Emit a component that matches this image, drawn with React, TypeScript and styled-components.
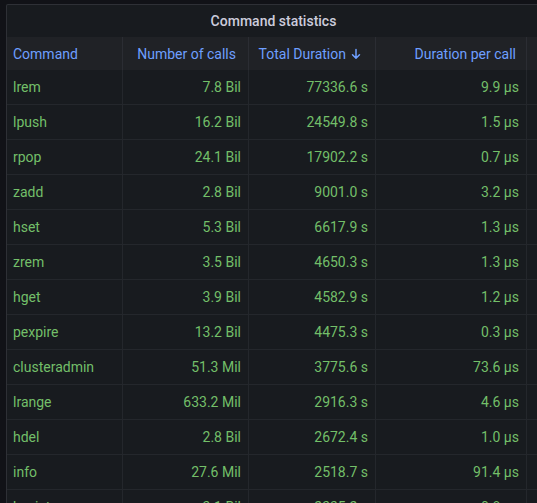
import React from "react";
import styled, { createGlobalStyle } from "styled-components";

const GlobalStyle = createGlobalStyle`
  html, body {
    margin: 0;
    padding: 0;
    height: 100%;
    overflow: hidden;
    background: #111217;
  }
  body {
    font-family: Roboto, "Noto Sans", "Liberation Sans", sans-serif;
    font-size: 14px;
  }
`;

const Page = styled.div`
  padding: 4px 0 0 6px;
  height: 100vh;
  box-sizing: border-box;
`;

const Panel = styled.section`
  width: 535px;
  height: 520px;
  box-sizing: border-box;
  background: #181b1f;
  border: 1px solid rgba(204, 204, 220, 0.12);
  border-radius: 2px;
  overflow: hidden;
  display: flex;
  flex-direction: column;
`;

const Title = styled.h2`
  margin: 0;
  height: 32px;
  display: flex;
  align-items: center;
  justify-content: center;
  font-size: 14px;
  font-weight: 500;
  color: #ccccdc;
  flex-shrink: 0;
`;

const Table = styled.div`
  display: flex;
  flex-direction: column;
  width: 700px;
`;

const HeaderRow = styled.div`
  display: flex;
  height: 33px;
  background: #202226;
`;

const Row = styled.div`
  display: flex;
  height: 35px;
  box-sizing: border-box;
  border-bottom: 1px solid rgba(204, 204, 220, 0.07);
`;

const Cell = styled.div<{ $w: number; $right?: boolean; $head?: boolean; $pr?: number }>`
  width: ${(p) => p.$w}px;
  flex-shrink: 0;
  box-sizing: border-box;
  display: flex;
  align-items: center;
  justify-content: ${(p) => (p.$right ? "flex-end" : "flex-start")};
  padding: 0 ${(p) => p.$pr ?? 7}px 0 6px;
  border-right: 1px solid rgba(204, 204, 220, 0.07);
  color: ${(p) => (p.$head ? "#6e9fff" : "#73bf69")};
  white-space: nowrap;
`;

const SortIcon = styled.svg`
  width: 10px;
  height: 12px;
  margin-left: 5px;
  margin-right: 4px;
`;

const widths = [116, 126, 127, 151, 180];

const rows: [string, string, string, string][] = [
  ["lrem", "7.8 Bil", "77336.6 s", "9.9 μs"],
  ["lpush", "16.2 Bil", "24549.8 s", "1.5 μs"],
  ["rpop", "24.1 Bil", "17902.2 s", "0.7 μs"],
  ["zadd", "2.8 Bil", "9001.0 s", "3.2 μs"],
  ["hset", "5.3 Bil", "6617.9 s", "1.3 μs"],
  ["zrem", "3.5 Bil", "4650.3 s", "1.3 μs"],
  ["hget", "3.9 Bil", "4582.9 s", "1.2 μs"],
  ["pexpire", "13.2 Bil", "4475.3 s", "0.3 μs"],
  ["clusteradmin", "51.3 Mil", "3775.6 s", "73.6 μs"],
  ["lrange", "633.2 Mil", "2916.3 s", "4.6 μs"],
  ["hdel", "2.8 Bil", "2672.4 s", "1.0 μs"],
  ["info", "27.6 Mil", "2518.7 s", "91.4 μs"],
  ["hexists", "3.1 Bil", "2335.2 s", "0.8 μs"],
];

export default function App() {
  return (
    <>
      <GlobalStyle />
      <Page>
        <Panel>
          <Title>Command statistics</Title>
          <Table>
            <HeaderRow>
              <Cell $w={widths[0]} $head>Command</Cell>
              <Cell $w={widths[1]} $head $right $pr={12}>Number of calls</Cell>
              <Cell $w={widths[2]} $head $right $pr={10}>
                Total Duration
                <SortIcon viewBox="0 0 10 12">
                  <path
                    d="M5 1.5v8.5M1.5 6.8 5 10.3l3.5-3.5"
                    fill="none"
                    stroke="#6e9fff"
                    strokeWidth="1.5"
                    strokeLinecap="round"
                    strokeLinejoin="round"
                  />
                </SortIcon>
              </Cell>
              <Cell $w={widths[3]} $head $right $pr={10}>Duration per call</Cell>
              <Cell $w={widths[4]} $head $right />
            </HeaderRow>
            {rows.map((r) => (
              <Row key={r[0]}>
                <Cell $w={widths[0]}>{r[0]}</Cell>
                <Cell $w={widths[1]} $right>{r[1]}</Cell>
                <Cell $w={widths[2]} $right>{r[2]}</Cell>
                <Cell $w={widths[3]} $right>{r[3]}</Cell>
                <Cell $w={widths[4]} $right />
              </Row>
            ))}
          </Table>
        </Panel>
      </Page>
    </>
  );
}
